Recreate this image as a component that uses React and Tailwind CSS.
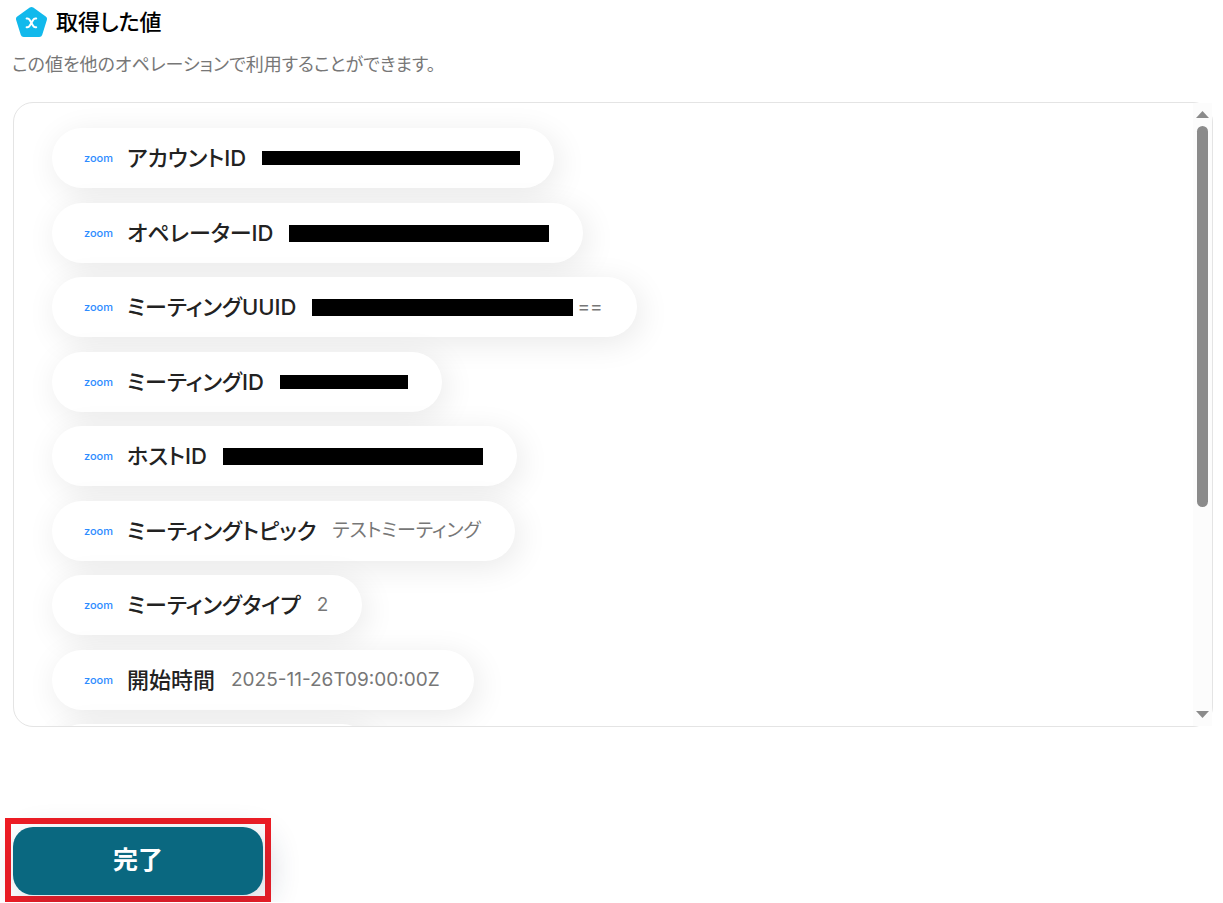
import React from 'react'

const values = [
  { label: 'アカウントID', mask: 'h-3.5 w-[258px]' },
  { label: 'オペレーターID', mask: 'h-[17px] w-[260px]' },
  { label: 'ミーティングUUID', mask: 'h-[17px] w-[261px] mr-1', value: '==' },
  { label: 'ミーティングID', mask: 'h-3.5 w-[128px]' },
  { label: 'ホストID', mask: 'h-[17px] w-[260px]' },
  { label: 'ミーティングトピック', value: 'テストミーティング' },
  { label: 'ミーティングタイプ', value: '2' },
  { label: '開始時間', value: '2025-11-26T09:00:00Z' },
]

function VariableIcon() {
  return (
    <svg className="h-8 w-8" viewBox="0 0 32 32" fill="none" aria-hidden="true">
      <path
        d="M15.5 4 L28 13 L23.3 28 H7.7 L3 13 Z"
        fill="#12b9ec"
        stroke="#12b9ec"
        strokeWidth="6"
        strokeLinejoin="round"
      />
      <path
        d="M10.6 12.6 C12.4 12.2 13 12.8 13.7 14 L17.1 19.8 C17.8 21 18.4 21.6 20.2 21.2 M20.2 12.6 C18.4 12.2 17.8 12.8 17.1 14 L13.7 19.8 C13 21 12.4 21.6 10.6 21.2"
        stroke="#fff"
        strokeWidth="2"
        strokeLinecap="round"
      />
    </svg>
  )
}

function ValuePill({ label, value, mask }) {
  return (
    <li className="mb-3.5 flex h-15 w-fit items-center rounded-full bg-white pr-[34px] pl-8 shadow-[4px_6px_32px_rgba(0,0,0,0.09)] odd:mb-[15px]">
      <span className="w-[43px] text-[11px] font-medium text-[#2d8cff]">zoom</span>
      <span className="mr-4 text-[22px] font-medium text-[#222]">{label}</span>
      {mask && <span className={`bg-black ${mask}`} />}
      {value && <span className="text-[19px] text-[#777]">{value}</span>}
    </li>
  )
}

function Scrollbar() {
  return (
    <div className="flex w-[19px] flex-col items-center bg-[#fcfcfc] py-2" aria-hidden="true">
      <svg className="h-[7px] w-[13px]" viewBox="0 0 13 7" fill="#8b8b8b">
        <path d="M6.5 0 L13 7 H0 Z" />
      </svg>
      <div className="mt-2 h-[381px] w-[11px] rounded-full bg-[#8b8b8b]" />
      <svg className="mt-auto h-[7px] w-[13px]" viewBox="0 0 13 7" fill="#8b8b8b">
        <path d="M0 0 H13 L6.5 7 Z" />
      </svg>
    </div>
  )
}

export default function App() {
  return (
    <main className="bg-white font-['Inter','Noto_Sans_CJK_JP',sans-serif] [font-feature-settings:'palt']" lang="ja">
      <section className="px-3 pt-1.5">
        <div className="flex items-center gap-2 pl-1">
          <VariableIcon />
          <h1 className="text-[22px] leading-8 font-medium text-black">取得した値</h1>
        </div>
        <p className="mt-[15px] text-lg leading-6 text-[#777]">
          この値を他のオペレーションで利用することができます。
        </p>
      </section>

      <section className="mt-[25px] mr-2.5 ml-[13px] flex h-[625px] rounded-[20px] border border-[#e4e4e4]">
        <ul className="flex-1 overflow-hidden rounded-l-[19px] pt-[25px] pl-[38px]">
          {values.map((item) => (
            <ValuePill key={item.label} {...item} />
          ))}
          <li className="h-15 w-[320px] rounded-full bg-white shadow-[4px_6px_32px_rgba(0,0,0,0.09)]" />
        </ul>
        <Scrollbar />
      </section>

      <div className="mt-[91px] ml-[5px] w-fit border-6 border-[#ee1c24] px-0.5 pt-[3px] pb-px">
        <button
          type="button"
          className="block h-[68px] w-[250px] rounded-[20px] bg-[#0a6880] text-[25px] font-bold text-white shadow-[6px_8px_32px_rgba(30,50,90,0.2)]"
        >
          完了
        </button>
      </div>
    </main>
  )
}
